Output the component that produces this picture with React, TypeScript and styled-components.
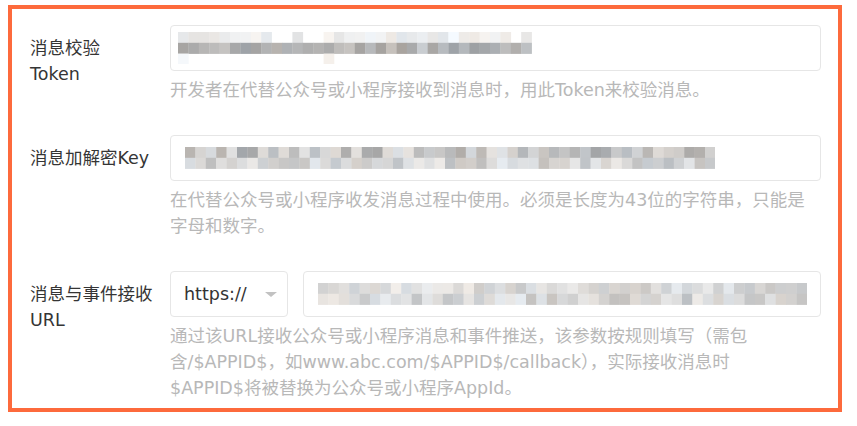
import React from "react";
import styled, { createGlobalStyle } from "styled-components";

const Global = createGlobalStyle`
  html, body { margin: 0; padding: 0; background: #ffffff; }
  body {
    font-family: "DejaVu Sans", "Noto Sans CJK SC", sans-serif;
    -webkit-font-smoothing: antialiased;
  }
`;

const Frame = styled.div`
  box-sizing: border-box;
  margin: 5px 0 0 8px;
  width: 834px;
  height: 407px;
  border: 4px solid #fd6a3c;
  padding: 16px 17px 0 18px;
  background: #ffffff;
`;

const Row = styled.div`
  display: grid;
  grid-template-columns: 140px 1fr;
  margin-bottom: 32px;
  &:last-child { margin-bottom: 0; }
`;

const Label = styled.div`
  padding-top: 10px;
  font-size: 17.5px;
  line-height: 26px;
  color: #353535;
`;

const Control = styled.div`
  display: flex;
  flex-direction: column;
`;

const Line = styled.div`
  display: flex;
  gap: 15px;
`;

const Field = styled.div<{ $pad: number }>`
  box-sizing: border-box;
  flex: 1 0 auto;
  height: 46px;
  border: 1px solid #e6e6e6;
  border-radius: 4px;
  background: #fff;
  display: flex;
  align-items: center;
  padding-left: ${(p) => p.$pad}px;
  overflow: hidden;
`;

const Select = styled.div`
  box-sizing: border-box;
  flex: none;
  width: 118px;
  height: 46px;
  border: 1px solid #e6e6e6;
  border-radius: 4px;
  display: flex;
  align-items: center;
  justify-content: space-between;
  padding: 0 10px 0 13px;
  font-size: 17.5px;
  color: #333;
`;

const Caret = styled.span`
  width: 0;
  height: 0;
  border-left: 6px solid transparent;
  border-right: 6px solid transparent;
  border-top: 5px solid #c2c2c2;
`;

const Help = styled.div`
  margin-top: 6px;
  font-size: 17.5px;
  line-height: 26px;
  color: #b8b8b8;
  white-space: nowrap;
`;

type Band = { min: number; max: number; prob: number; from?: number; to?: number };

function rng(seed: number) {
  let s = seed >>> 0;
  return () => {
    s = (s * 1664525 + 1013904223) >>> 0;
    return s / 4294967296;
  };
}

function Mosaic({ seed, cols, bands, bh = 10.8, bw = 10.4 }: { seed: number; cols: number; bands: Band[]; bh?: number; bw?: number }) {
  const r = rng(seed);
  const rects: React.ReactNode[] = [];
  bands.forEach((b, ri) => {
    for (let c = 0; c < cols; c++) {
      const v = r();
      const t = r();
      const p = r();
      if ((b.from !== undefined && c < b.from) || (b.to !== undefined && c > b.to)) continue;
      if (p > b.prob) continue;
      const g = Math.round(b.min + (b.max - b.min) * v);
      const tint = Math.round((t - 0.5) * 10);
      const col = `rgb(${g + tint},${g},${g - tint})`;
      rects.push(<rect key={`${ri}-${c}`} x={c * bw} y={ri * bh} width={bw + 0.3} height={bh + 0.3} fill={col} />);
    }
  });
  return (
    <svg width={cols * bw} height={bands.length * bh} style={{ display: "block", filter: "blur(0.4px)" }}>
      {rects}
    </svg>
  );
}

export default function App() {
  return (
    <>
      <Global />
      <Frame>
        <Row>
          <Label>
            消息校验
            <br />
            Token
          </Label>
          <Control>
            <Field $pad={7}>
              <Mosaic
                seed={11}
                cols={34}
                bands={[
                  { min: 226, max: 250, prob: 0.85 },
                  { min: 160, max: 205, prob: 1 },
                  { min: 236, max: 250, prob: 0.35, to: 14 },
                ]}
              />
            </Field>
            <Help>开发者在代替公众号或小程序接收到消息时，用此Token来校验消息。</Help>
          </Control>
        </Row>
        <Row>
          <Label>消息加解密Key</Label>
          <Control>
            <Field $pad={14}>
              <Mosaic
                seed={29}
                cols={51}
                bands={[
                  { min: 165, max: 228, prob: 1 },
                  { min: 190, max: 236, prob: 1 },
                ]}
              />
            </Field>
            <Help>
              在代替公众号或小程序收发消息过程中使用。必须是长度为43位的字符串，只能是
              <br />
              字母和数字。
            </Help>
          </Control>
        </Row>
        <Row>
          <Label>
            消息与事件接收
            <br />
            URL
          </Label>
          <Control>
            <Line>
              <Select>
                <span>https://</span>
                <Caret />
              </Select>
              <Field $pad={14}>
                <Mosaic
                  seed={47}
                  cols={47}
                  bands={[
                    { min: 200, max: 238, prob: 1 },
                    { min: 192, max: 236, prob: 1 },
                  ]}
                />
              </Field>
            </Line>
            <Help>
              通过该URL接收公众号或小程序消息和事件推送，该参数按规则填写（需包
              <br />
              含/$APPID$，如www.abc.com/$APPID$/callback），实际接收消息时
              <br />
              $APPID$将被替换为公众号或小程序AppId。
            </Help>
          </Control>
        </Row>
      </Frame>
    </>
  );
}
